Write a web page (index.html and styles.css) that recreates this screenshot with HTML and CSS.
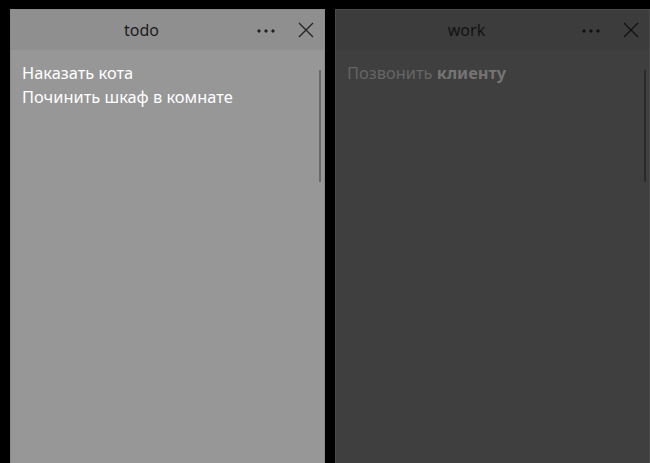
FILE: index.html
```html
<!DOCTYPE html>
<html lang="ru">
<head>
    <meta charset="UTF-8">
    <title>Notes</title>
    <link rel="stylesheet" href="styles.css">
</head>
<body>
    <div class="note note-active">
        <div class="note-header">
            <span class="note-title">todo</span>
            <span class="note-more">
                <svg width="18" height="4" viewBox="0 0 18 4"><circle cx="2" cy="2" r="1.2"/><circle cx="9" cy="2" r="1.2"/><circle cx="16" cy="2" r="1.2"/></svg>
            </span>
            <span class="note-close">
                <svg width="16" height="16" viewBox="0 0 16 16"><path d="M1 1 L15 15 M15 1 L1 15"/></svg>
            </span>
        </div>
        <div class="note-body">
            <p>Наказать кота</p>
            <p>Починить шкаф в комнате</p>
            <div class="scrollbar"></div>
        </div>
    </div>

    <div class="note note-inactive">
        <div class="note-header">
            <span class="note-title">work</span>
            <span class="note-more">
                <svg width="18" height="4" viewBox="0 0 18 4"><circle cx="2" cy="2" r="1.2"/><circle cx="9" cy="2" r="1.2"/><circle cx="16" cy="2" r="1.2"/></svg>
            </span>
            <span class="note-close">
                <svg width="16" height="16" viewBox="0 0 16 16"><path d="M1 1 L15 15 M15 1 L1 15"/></svg>
            </span>
        </div>
        <div class="note-body">
            <p>Позвонить <b>клиенту</b></p>
            <div class="scrollbar"></div>
        </div>
    </div>
</body>
</html>
```

FILE: styles.css
```css
* {
    margin: 0;
    padding: 0;
    box-sizing: border-box;
}

html, body {
    height: 100%;
    overflow: hidden;
}

body {
    background-color: #000;
    font-family: "Noto Sans", "Open Sans", sans-serif;
    display: flex;
    gap: 10px;
    padding: 9px 0 0 10px;
}

.note {
    width: 315px;
    height: 470px;
    display: flex;
    flex-direction: column;
    border: 1px solid;
}

.note-header {
    height: 40px;
    display: flex;
    align-items: center;
    flex-shrink: 0;
}

.note-title {
    flex: 1;
    text-align: center;
    font-size: 16px;
    padding-left: 24px;
}

.note-more {
    width: 36px;
    display: flex;
    justify-content: center;
    margin-top: 1px;
    margin-right: 3px;
}

.note-close {
    width: 37px;
    display: flex;
    justify-content: center;
}

.note-close svg path {
    stroke-width: 1.3;
    fill: none;
}

.note-body {
    flex: 1;
    position: relative;
    padding: 11px 11px;
    font-size: 16.4px;
    line-height: 24px;
}

.scrollbar {
    position: absolute;
    right: 3px;
    top: 20px;
    width: 2px;
    height: 112px;
}

/* active note */
.note-active {
    border-color: #8a8a8a;
    background-color: #979797;
}

.note-active .note-header {
    background-color: #8f8f8f;
    color: #1c1c1c;
}

.note-active svg {
    fill: #222;
    stroke: #222;
}

.note-active .note-body {
    color: #fff;
}

.note-active .scrollbar {
    background-color: #6a6a6a;
}

/* inactive note */
.note-inactive {
    border-color: #4a4a4a;
    background-color: #3f3f3f;
}

.note-inactive .note-header {
    background-color: #3c3c3c;
    color: #121212;
}

.note-inactive svg {
    fill: #111;
    stroke: #111;
}

.note-inactive .note-body {
    color: #656565;
}

.note-inactive .note-body b {
    color: #747474;
}

.note-inactive .scrollbar {
    background-color: #2a2a2a;
}
```
